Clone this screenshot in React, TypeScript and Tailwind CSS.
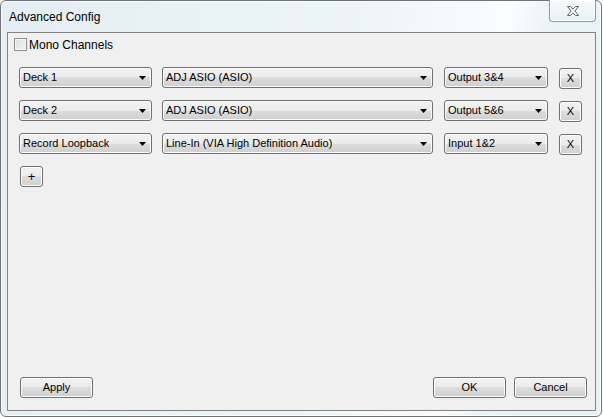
import React from "react"

const btnFace =
  "rounded-[3px] border border-[#707070] bg-[linear-gradient(to_bottom,#f2f2f2_0%,#ebebeb_50%,#dddddd_50%,#cfcfcf_100%)] shadow-[inset_0_0_0_1px_#fcfcfc]"

function Combo({ value, width }: { value: string; width: string }) {
  return (
    <div className={`${btnFace} ${width} flex h-[21px] shrink-0 items-center justify-between pl-[3px] pr-[5px]`}>
      <span className="truncate text-[11px] leading-none text-black">{value}</span>
      <svg width="7" height="4" viewBox="0 0 7 4" className="shrink-0">
        <path d="M0 0h7L3.5 4z" fill="#000" />
      </svg>
    </div>
  )
}

function Button({ label, className = "" }: { label: string; className?: string }) {
  return (
    <button className={`${btnFace} flex h-[21px] shrink-0 items-center justify-center text-[11px] leading-none text-black ${className}`}>
      {label}
    </button>
  )
}

const rows = [
  { deck: "Deck 1", device: "ADJ ASIO (ASIO)", channel: "Output 3&4" },
  { deck: "Deck 2", device: "ADJ ASIO (ASIO)", channel: "Output 5&6" },
  { deck: "Record Loopback", device: "Line-In (VIA High Definition Audio)", channel: "Input 1&2" },
]

export default function App() {
  return (
    <div className="h-[418px] w-[603px] bg-white font-['Liberation_Sans',Arial,sans-serif]">
      <div className="flex h-[417px] w-[602px] flex-col rounded-[6px] border border-[#6e7479] bg-[linear-gradient(100deg,#e4eef3_0%,#edf5f8_55%,#fbfdfe_76%,#eaf4f8_82%,#e8f2f6_100%)] shadow-[inset_0_0_0_1px_#f8fbfc]">
        {/* Title bar */}
        <div className="flex h-[31px] items-start justify-between">
          <span className="pl-[8px] pt-[10px] text-[12px] leading-none text-black">Advanced Config</span>
          <div className="-mt-px mr-[5px] flex h-[22px] w-[47px] items-center justify-center rounded-b-[4px] border border-t-0 border-[#8d979e] bg-[linear-gradient(to_bottom,#f7fafc,#e8f0f4)] shadow-[inset_0_0_0_1px_#ffffff]">
            <svg width="12" height="10" viewBox="0 0 12 10">
              <path
                d="M0.5 0.5h3L6 3l2.5-2.5h3L8 5l3.5 4.5h-3L6 7 3.5 9.5h-3L4 5z"
                fill="#f4f6f8"
                stroke="#5b6670"
                strokeWidth="1"
                strokeLinejoin="round"
              />
            </svg>
          </div>
        </div>

        {/* Client area */}
        <div className="mb-[5px] ml-[6px] mr-[5px] flex flex-1 flex-col border border-[#838383] bg-[#f0f0f0]">
          <label className="flex h-[13px] items-center gap-[2px] pl-[6px] mt-[5px]">
            <span className="h-[13px] w-[13px] border border-[#8e8f8f] bg-[linear-gradient(135deg,#dcdcdc,#f6f6f6)] shadow-[inset_0_0_0_1px_#f4f4f4]" />
            <span className="text-[12px] leading-none text-black">Mono Channels</span>
          </label>

          <div className="mt-[16px] flex flex-col gap-[12px] pl-[11px]">
            {rows.map((r) => (
              <div key={r.deck} className="flex h-[21px] items-start">
                <Combo value={r.deck} width="w-[133px]" />
                <div className="ml-[10px]">
                  <Combo value={r.device} width="w-[271px]" />
                </div>
                <div className="ml-[11px]">
                  <Combo value={r.channel} width="w-[104px]" />
                </div>
                <Button label="X" className="ml-[11px] mt-px w-[23px]" />
              </div>
            ))}
          </div>

          <div className="mt-[12px] pl-[12px]">
            <Button label="+" className="w-[23px] text-[13px]" />
          </div>

          <div className="mt-auto mb-[12px] flex items-center pl-[12px] pr-[8px]">
            <Button label="Apply" className="w-[73px]" />
            <div className="ml-auto flex gap-[8px]">
              <Button label="OK" className="w-[73px]" />
              <Button label="Cancel" className="w-[73px]" />
            </div>
          </div>
        </div>
      </div>
    </div>
  )
}
